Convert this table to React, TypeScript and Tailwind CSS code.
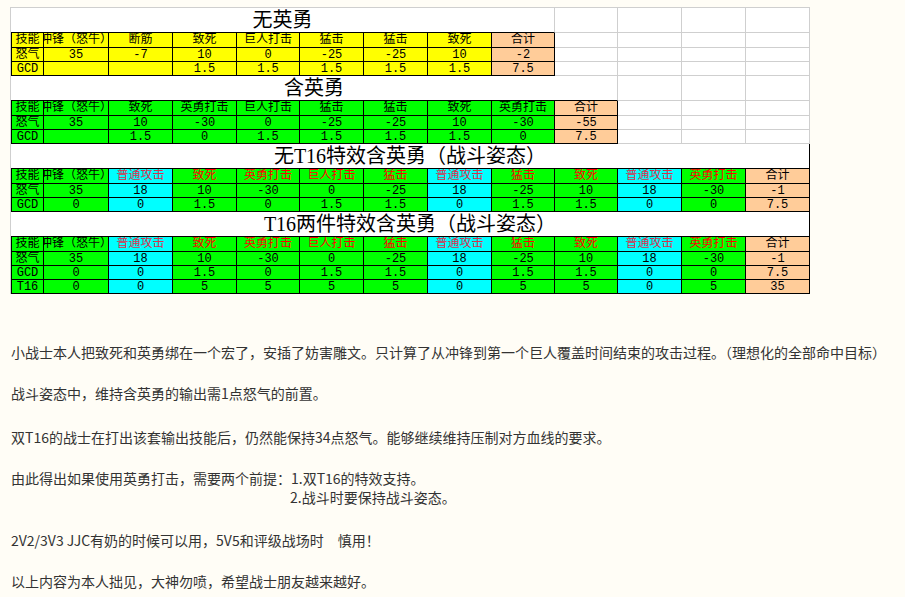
import React from "react";

type Block = {
  title: string;
  span: string;
  titleRight: string;
  header: string[];
  rows: string[][];
  bg: (i: number) => string;
  red: (i: number) => string;
};

const cols =
  "grid grid-cols-[33px_65px_64px_64px_63px_64px_64px_64px_63px_63px_64px_64px_64px]";

const Y = "bg-[#ffff00]";
const G = "bg-[#00ff00]";
const C = "bg-[#00ffff]";
const P = "bg-[#ffcc99]";

const skills13 = [
  "技能",
  "冲锋（怒牛）",
  "普通攻击",
  "致死",
  "英勇打击",
  "巨人打击",
  "猛击",
  "普通攻击",
  "猛击",
  "致死",
  "普通攻击",
  "英勇打击",
  "合计",
];

const rage13 = ["怒气", "35", "18", "10", "-30", "0", "-25", "18", "-25", "10", "18", "-30", "-1"];
const gcd13 = ["GCD", "0", "0", "1.5", "0", "1.5", "1.5", "0", "1.5", "1.5", "0", "0", "7.5"];

const bg13 = (i: number) => (i === 12 ? P : i === 2 || i === 7 || i === 10 ? C : G);
const red13 = (i: number) =>
  i === 2 || i === 7 || i === 10 ? "text-[#d8304c]" : i >= 3 && i <= 11 ? "text-[#ff0000]" : "text-black";

const blocks: Block[] = [
  {
    title: "无英勇",
    span: "col-span-9",
    titleRight: "border-r-[#cfcfcf]",
    header: ["技能", "冲锋（怒牛）", "断筋", "致死", "巨人打击", "猛击", "猛击", "致死", "合计"],
    rows: [
      ["怒气", "35", "-7", "10", "0", "-25", "-25", "10", "-2"],
      ["GCD", "", "", "1.5", "1.5", "1.5", "1.5", "1.5", "7.5"],
    ],
    bg: (i) => (i === 8 ? P : Y),
    red: () => "text-black",
  },
  {
    title: "含英勇",
    span: "col-span-10",
    titleRight: "border-r-[#cfcfcf]",
    header: ["技能", "冲锋（怒牛）", "致死", "英勇打击", "巨人打击", "猛击", "猛击", "致死", "英勇打击", "合计"],
    rows: [
      ["怒气", "35", "10", "-30", "0", "-25", "-25", "10", "-30", "-55"],
      ["GCD", "", "1.5", "0", "1.5", "1.5", "1.5", "1.5", "0", "7.5"],
    ],
    bg: (i) => (i === 9 ? P : G),
    red: () => "text-black",
  },
  {
    title: "无T16特效含英勇（战斗姿态）",
    span: "col-span-full",
    titleRight: "border-r-black",
    header: skills13,
    rows: [rage13, gcd13],
    bg: bg13,
    red: red13,
  },
  {
    title: "T16两件特效含英勇（战斗姿态）",
    span: "col-span-full",
    titleRight: "border-r-black",
    header: skills13,
    rows: [rage13, gcd13, ["T16", "0", "0", "5", "5", "5", "5", "0", "5", "5", "0", "5", "35"]],
    bg: bg13,
    red: red13,
  },
];

function Row({ cells, block, height, isHeader }: { cells: string[]; block: Block; height: string; isHeader?: boolean }) {
  return (
    <>
      {Array.from({ length: 13 }).map((_, i) =>
        i < cells.length ? (
          <div
            key={i}
            className={`${height} flex items-center justify-center overflow-hidden whitespace-nowrap border-r border-b border-black ${
              i === 0 ? "border-l" : ""
            } ${block.bg(i)} ${isHeader ? block.red(i) : "text-black"} text-[12px] leading-none`}
          >
            {cells[i]}
          </div>
        ) : (
          <div key={i} className={`${height} border-r border-b border-[#cfcfcf] bg-white`} />
        ),
      )}
    </>
  );
}

function Sheet({ block }: { block: Block }) {
  const fill = block.header.length;
  return (
    <div className={cols}>
      <div
        className={`${block.span} flex h-[25px] items-center justify-center border-r border-b border-b-black ${block.titleRight} bg-white font-['Liberation_Serif','Noto_Sans_CJK_SC',serif] text-[20px] leading-none text-black`}
      >
        {block.title}
      </div>
      {Array.from({ length: 13 - fill }).map((_, i) => (
        <div key={i} className="h-[25px] border-r border-b border-[#cfcfcf] bg-white" />
      ))}
      <Row cells={block.header} block={block} height="h-[15px]" isHeader />
      {block.rows.map((r, k) => (
        <Row key={k} cells={r} block={block} height="h-[14px]" />
      ))}
    </div>
  );
}

export default function App() {
  return (
    <div className="min-h-screen w-full bg-[#fffdf6] pt-[7px] font-['Noto_Sans_CJK_SC',sans-serif]">
      <div className="ml-[10px] w-[800px] border-t border-l border-[#cfcfcf] font-['Liberation_Mono','Noto_Sans_CJK_SC',monospace]">
        {blocks.map((b) => (
          <Sheet key={b.title} block={b} />
        ))}
      </div>

      <div className="mt-[48px] pl-[11px] text-[14px] text-[#333]">
        <div className="h-[21px] whitespace-nowrap leading-[21px]">
          小战士本人把致死和英勇绑在一个宏了，安插了妨害雕文。只计算了从冲锋到第一个巨人覆盖时间结束的攻击过程。（理想化的全部命中目标）
        </div>
        <div className="mt-[20px] h-[21px] leading-[21px]">战斗姿态中，维持含英勇的输出需1点怒气的前置。</div>
        <div className="mt-[23px] h-[21px] leading-[21px]">
          双T16的战士在打出该套输出技能后，仍然能保持34点怒气。能够继续维持压制对方血线的要求。
        </div>
        <div className="mt-[21px] h-[19px] leading-[19px]">由此得出如果使用英勇打击，需要两个前提：1.双T16的特效支持。</div>
        <div className="h-[19px] pl-[279px] leading-[19px]">2.战斗时要保持战斗姿态。</div>
        <div className="mt-[23px] h-[21px] whitespace-pre leading-[21px]">
          2V2/3V3 JJC有奶的时候可以用，5V5和评级战场时　慎用！
        </div>
        <div className="mt-[20px] h-[21px] leading-[21px]">以上内容为本人拙见，大神勿喷，希望战士朋友越来越好。</div>
      </div>
    </div>
  );
}
